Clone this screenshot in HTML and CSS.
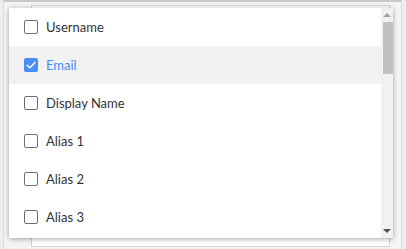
FILE: index.html
```html
<!DOCTYPE html>
<html>
<head>
<meta charset="utf-8">
<link rel="stylesheet" href="styles.css">
</head>
<body>
<div class="frame">
  <div class="control"></div>
</div>
<div class="dropdown">
  <ul class="list">
    <li class="item"><span class="box"></span><span class="label">Username</span></li>
    <li class="item active"><span class="box checked"><svg viewBox="0 0 14 14" width="14" height="14"><path d="M3.2 7.2 L5.9 9.8 L10.9 4.4" fill="none" stroke="#fff" stroke-width="1.5" stroke-linecap="round" stroke-linejoin="round"/></svg></span><span class="label">Email</span></li>
    <li class="item"><span class="box"></span><span class="label">Display Name</span></li>
    <li class="item"><span class="box"></span><span class="label">Alias 1</span></li>
    <li class="item"><span class="box"></span><span class="label">Alias 2</span></li>
    <li class="item"><span class="box"></span><span class="label">Alias 3</span></li>
  </ul>
  <div class="scrollbar">
    <span class="arrow up"></span>
    <span class="thumb"></span>
    <span class="spacer"></span>
    <span class="arrow down"></span>
  </div>
</div>
</body>
</html>
```

FILE: styles.css
```css
html, body {
  margin: 0;
  padding: 0;
}
body {
  width: 406px;
  height: 249px;
  overflow: hidden;
  background: #eeeeee;
  font-family: Lato, "Noto Sans", sans-serif;
  position: relative;
}
.frame {
  box-sizing: border-box;
  height: 249px;
  margin: 0 4px 0 3px;
  border-top: 2px solid #c9c9c9;
  border-left: 1px solid #dcdcdc;
  border-right: 1px solid #dcdcdc;
  background: #f4f4f4;
  padding: 3px 11px 2px 27px;
}
.control {
  box-sizing: border-box;
  height: 242px;
  background: #ffffff;
  border: 1px solid #d6d6d6;
}
.dropdown {
  position: absolute;
  left: 9px;
  top: 8px;
  width: 384px;
  height: 230px;
  background: #ffffff;
  box-shadow: 0 1px 5px rgba(0, 0, 0, 0.35);
  display: flex;
  overflow: hidden;
}
.list {
  list-style: none;
  margin: 0;
  padding: 0;
  flex: 1;
}
.item {
  height: 38px;
  display: flex;
  align-items: center;
  padding-left: 15px;
  gap: 8px;
  font-size: 13px;
  color: #333333;
}
.item.active {
  background: #f2f2f2;
  color: #3f8cf8;
}
.box {
  box-sizing: border-box;
  width: 14px;
  height: 14px;
  border: 1.5px solid #6f6f6f;
  border-radius: 2px;
  display: flex;
  flex: none;
}
.box.checked {
  border: none;
  background: #4a8ff8;
}
.label {
  line-height: 16px;
}
.scrollbar {
  width: 12px;
  background: #f1f1f1;
  display: flex;
  flex-direction: column;
  align-items: center;
  padding: 5px 0 5px;
  box-sizing: border-box;
}
.arrow {
  width: 0;
  height: 0;
  border-left: 4px solid transparent;
  border-right: 4px solid transparent;
  flex: none;
}
.arrow.up {
  border-bottom: 4px solid #a3a3a3;
}
.arrow.down {
  border-top: 4px solid #505050;
}
.thumb {
  width: 10px;
  height: 52px;
  margin-top: 5px;
  margin-left: 2px;
  background: #c1c1c1;
  flex: none;
}
.spacer {
  flex: 1;
}
```
